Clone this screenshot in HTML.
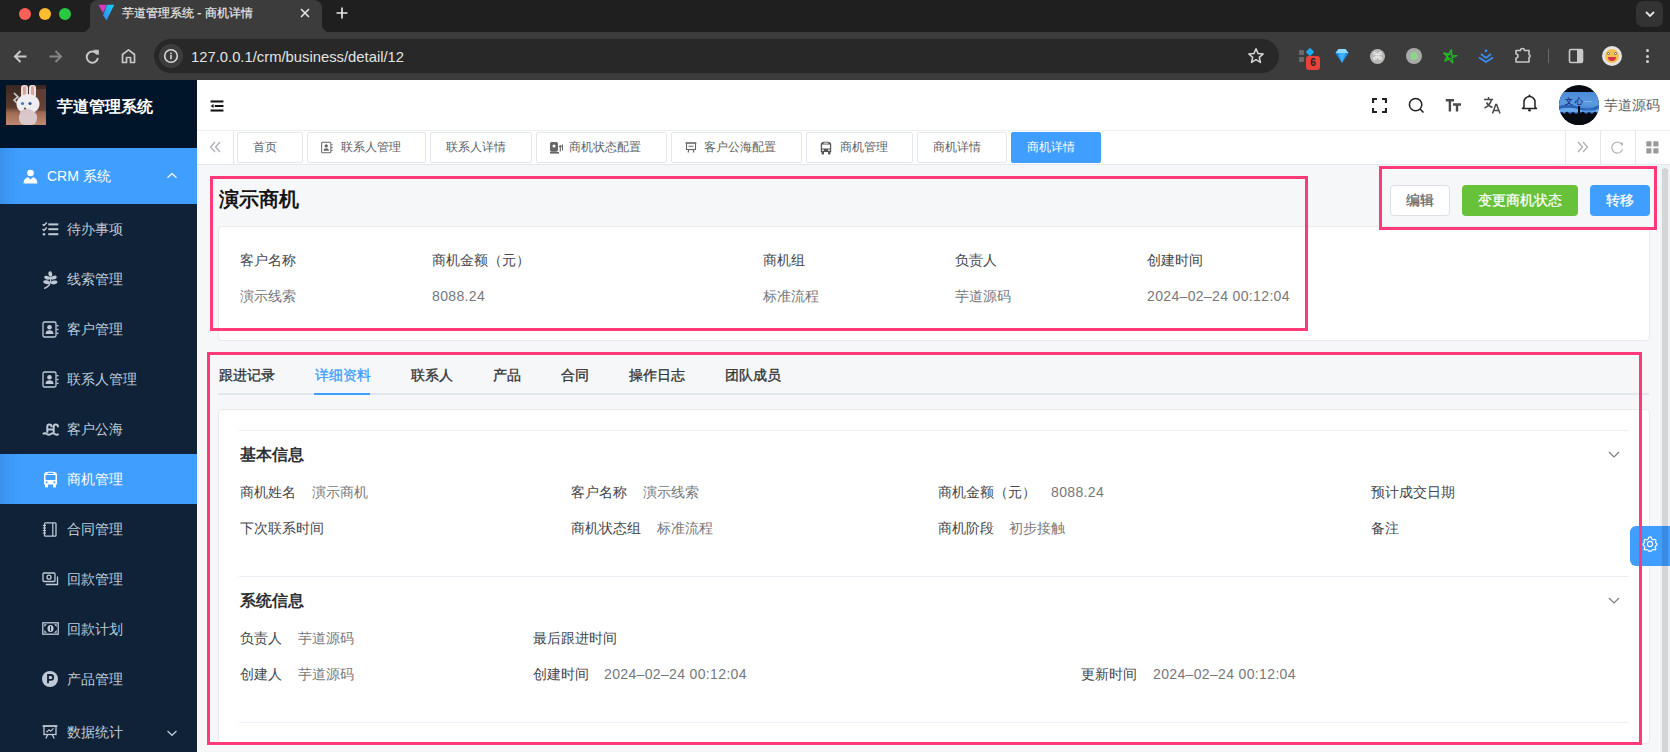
<!DOCTYPE html>
<html><head><meta charset="utf-8">
<style>
*{box-sizing:border-box;margin:0;padding:0}
html,body{width:1670px;height:752px;overflow:hidden;background:#f5f7f9;font-family:"Liberation Sans",sans-serif;}
.a{position:absolute}
/* chrome */
#tabstrip{left:0;top:0;width:1670px;height:32px;background:#1f1f1f}
#toolbar{left:0;top:32px;width:1670px;height:48px;background:#3c3c3c}
.tl{width:12px;height:12px;border-radius:50%;top:7.5px}
#tab{left:90px;top:0;width:232px;height:32px;background:#3c3c3c;border-radius:8px 8px 0 0}
#tab:before,#tab:after{content:"";position:absolute;bottom:0;width:8px;height:8px}
#tab:before{left:-8px;background:radial-gradient(circle at 0 0,#1f1f1f 8px,#3c3c3c 8.5px)}
#tab:after{right:-8px;background:radial-gradient(circle at 100% 0,#1f1f1f 8px,#3c3c3c 8.5px)}
#omni{left:154px;top:39px;width:1125px;height:34px;background:#282828;border-radius:17px}
/* sidebar */
#side{left:0;top:80px;width:197px;height:672px;background:#0f2237}
#logo{left:0;top:80px;width:197px;height:68px;background:#001529}
.mi{position:absolute;left:0;width:197px;height:50px;color:#bfcbd9;font-size:14px;line-height:50px}
.mi .t{position:absolute;left:67px;top:0}
.mi svg{position:absolute;left:42px;top:18px}
.act{background:linear-gradient(90deg,#3a90ea 0,#3d97f5 8px,#409eff 20px);color:#fff}
/* header */
#hdr{left:197px;top:80px;width:1473px;height:51px;background:#fff;border-bottom:1px solid #eee}
#tags{left:197px;top:131px;width:1473px;height:34px;background:#fff;border-bottom:1px solid #e4e7ed}
.tag{position:absolute;top:132px;height:31px;border:1px solid #e4e7ed;border-radius:2px;background:#fff;font-size:12px;line-height:29px;color:#606266;white-space:nowrap}
.tag .t{position:absolute;top:0}
.pink{position:absolute;border:3px solid #fe3a78}
.card{position:absolute;background:#fff;border:1px solid #e8eaef;border-radius:4px}
.lbl{position:absolute;font-size:14px;color:#45474b;white-space:nowrap;line-height:20px}
.val{position:absolute;font-size:14px;color:#76787c;white-space:nowrap;line-height:20px}
.btn{position:absolute;top:185px;height:31px;border-radius:4px;font-size:14px;line-height:31px;text-align:center;color:#fff;-webkit-text-stroke:0.25px currentColor}
.tabi{position:absolute;top:365px;font-size:14px;line-height:20px;color:#303133;-webkit-text-stroke:0.3px currentColor;white-space:nowrap}
.sec{position:absolute;font-size:16px;font-weight:bold;color:#303133;line-height:22px}
.num{letter-spacing:0.35px}
.hl{position:absolute;height:1px;background:#ebeef5}
</style></head><body>
<!-- CHROME -->
<div id="tabstrip" class="a"></div>
<div id="toolbar" class="a"></div>
<div class="a tl" style="left:19px;background:#fe5f57"></div>
<div class="a tl" style="left:39px;background:#febc2e"></div>
<div class="a tl" style="left:59px;background:#28c840"></div>
<div id="tab" class="a"></div>
<svg class="a" style="left:97px;top:4px" width="18" height="18" viewBox="0 0 18 18">
<defs><linearGradient id="vg" x1="0" y1="1" x2="1" y2="0"><stop offset="0" stop-color="#3b7ef0"/><stop offset="1" stop-color="#12d6f8"/></linearGradient></defs>
<polygon points="1.4,0.8 9.6,0.8 6,8.9" fill="#d93bc0"/>
<polygon points="10,0.8 17.2,0.8 9.6,16.6 6,11.3" fill="url(#vg)"/>
</svg>
<div class="a" style="left:122px;top:5px;font-size:12px;line-height:16px;color:#e6e6e6;white-space:nowrap;-webkit-text-stroke:0.2px #e6e6e6">芋道管理系统 - 商机详情</div>
<svg class="a" style="left:299px;top:7px" width="12" height="12" viewBox="0 0 12 12"><path d="M2 2L10 10M10 2L2 10" stroke="#e6e6e6" stroke-width="1.6"/></svg>
<svg class="a" style="left:335px;top:6px" width="14" height="14" viewBox="0 0 14 14"><path d="M7 1.5V12.5M1.5 7H12.5" stroke="#e6e6e6" stroke-width="1.7"/></svg>
<div class="a" style="left:1636px;top:1px;width:27px;height:26px;border-radius:7px;background:#333"></div>
<svg class="a" style="left:1644px;top:9px" width="12" height="10" viewBox="0 0 12 10"><path d="M2 3L6 7L10 3" stroke="#e6e6e6" stroke-width="1.8" fill="none"/></svg>
<!-- toolbar icons -->
<svg class="a" style="left:13px;top:49px" width="15" height="15" viewBox="0 0 15 15"><path d="M13.5 7.5H2.5M7.5 2L2 7.5L7.5 13" stroke="#c8c8c8" stroke-width="2" fill="none"/></svg>
<svg class="a" style="left:48px;top:49px" width="15" height="15" viewBox="0 0 15 15"><path d="M1.5 7.5H12.5M7.5 2L13 7.5L7.5 13" stroke="#858585" stroke-width="2" fill="none"/></svg>
<svg class="a" style="left:85px;top:49px" width="15" height="15" viewBox="0 0 15 15"><path d="M12.2 5.2A5.6 5.6 0 1 0 12.9 9" stroke="#c8c8c8" stroke-width="1.9" fill="none"/><path d="M8.8 1.2H13.4V5.8Z" fill="#c8c8c8" stroke="#c8c8c8" stroke-width="0.8"/></svg>
<svg class="a" style="left:121px;top:48px" width="15" height="16" viewBox="0 0 15 16"><path d="M1.5 14.5V6.5L7.5 1.8L13.5 6.5V14.5H9.5V9.5H5.5V14.5Z" stroke="#c8c8c8" stroke-width="1.7" fill="none" stroke-linejoin="round"/></svg>
<div id="omni" class="a"></div>
<div class="a" style="left:159px;top:44px;width:24px;height:24px;border-radius:50%;background:#3c3c3c"></div>
<svg class="a" style="left:163px;top:48px" width="16" height="16" viewBox="0 0 16 16"><circle cx="8" cy="8" r="6.3" stroke="#d8d8d8" stroke-width="1.6" fill="none"/><rect x="7.2" y="7" width="1.6" height="4.2" fill="#d8d8d8"/><rect x="7.2" y="4.6" width="1.6" height="1.6" fill="#d8d8d8"/></svg>
<div class="a" style="left:191px;top:48px;font-size:14.8px;line-height:18px;color:#e3e3e3;white-space:nowrap">127.0.0.1/crm/business/detail/12</div>
<svg class="a" style="left:1247px;top:47px" width="18" height="18" viewBox="0 0 18 18"><path d="M9 1.8L11.1 6.6L16.2 7L12.3 10.4L13.5 15.4L9 12.7L4.5 15.4L5.7 10.4L1.8 7L6.9 6.6Z" stroke="#d8d8d8" stroke-width="1.5" fill="none" stroke-linejoin="round"/></svg>
<div class="a" style="left:1299px;top:50px;width:5px;height:5px;background:#6a6a6a;border-radius:1px"></div>
<div class="a" style="left:1299px;top:57px;width:5px;height:5px;background:#6a6a6a;border-radius:1px"></div>
<div class="a" style="left:1307px;top:49px;width:6px;height:6px;background:#1fa9f2;transform:rotate(45deg);border-radius:1px"></div>
<div class="a" style="left:1306px;top:56px;width:14px;height:14px;background:#e8423a;border-radius:3px;font-size:10px;font-weight:bold;line-height:14px;color:#222;text-align:center">6</div>
<svg class="a" style="left:1335px;top:48px" width="14" height="16" viewBox="0 0 14 16"><path d="M0.5 5L3.5 1H10.5L13.5 5L7 15Z" fill="#1f8fe8"/><path d="M0.5 5L3.5 1H10.5L13.5 5Z" fill="#8fd8ff"/><path d="M3.5 5L7 15L10.5 5Z" fill="#3fb0ff"/></svg>
<div class="a" style="left:1370px;top:49px;width:15px;height:15px;border-radius:50%;background:#b8b8b8"></div>
<div class="a" style="left:1372px;top:49px;font-size:11px;line-height:15px;color:#f0f0f0">⌘</div>
<div class="a" style="left:1406px;top:48px;width:16px;height:16px;border-radius:50%;background:#a9a9a9"></div>
<div class="a" style="left:1410px;top:52px;width:8px;height:8px;border-radius:50%;background:#8fd18f"></div>
<svg class="a" style="left:1442px;top:48px" width="16" height="16" viewBox="0 0 16 16"><path d="M8.0 1.5 L12.1 14.2 L1.3 6.3 L14.7 6.3 L3.9 14.2Z" stroke="#22b422" stroke-width="1.4" fill="none" stroke-linejoin="round" transform="rotate(12 8 8)"/></svg>
<svg class="a" style="left:1478px;top:49px" width="16" height="14" viewBox="0 0 16 14"><circle cx="8" cy="1.8" r="1.4" fill="#3a8ef5"/><path d="M3 5L8 9L13 5M1 8.5L8 13L15 8.5" stroke="#3a8ef5" stroke-width="1.7" fill="none"/></svg>
<svg class="a" style="left:1514px;top:46px" width="18" height="18" viewBox="0 0 18 18"><path d="M2 4.5H6.5A2 2 0 0 1 10.5 4.5H15V8.5A1.6 1.6 0 0 1 15 11.5V16H2V12A2 2 0 0 0 2 8Z" stroke="#c8c8c8" stroke-width="1.6" fill="none" stroke-linejoin="round"/></svg>
<div class="a" style="left:1548px;top:49px;width:1px;height:14px;background:#6a6a6a"></div>
<svg class="a" style="left:1568px;top:48px" width="16" height="16" viewBox="0 0 16 16"><rect x="1.5" y="1.5" width="13" height="13" rx="1.5" stroke="#c8c8c8" stroke-width="1.6" fill="none"/><rect x="9" y="1.5" width="5.5" height="13" fill="#c8c8c8"/></svg>
<div class="a" style="left:1602px;top:46px;width:20px;height:20px;border-radius:50%;background:#e4e4e4"></div>
<div class="a" style="left:1605px;top:49px;width:14px;height:14px;border-radius:50%;background:#f2c14e"></div>
<div class="a" style="left:1608px;top:57px;width:8px;height:4px;border-radius:0 0 4px 4px;background:#d8344a"></div>
<div class="a" style="left:1607px;top:52px;width:3px;height:3px;border-radius:50%;background:#fff;border:0.5px solid #666"></div>
<div class="a" style="left:1614px;top:52px;width:3px;height:3px;border-radius:50%;background:#fff;border:0.5px solid #666"></div>
<div class="a" style="left:1646px;top:49px;width:3px;height:3px;border-radius:50%;background:#d0d0d0"></div>
<div class="a" style="left:1646px;top:55px;width:3px;height:3px;border-radius:50%;background:#d0d0d0"></div>
<div class="a" style="left:1646px;top:60px;width:3px;height:3px;border-radius:50%;background:#d0d0d0"></div>
<!-- SIDEBAR -->
<div id="side" class="a"></div>
<div id="logo" class="a"></div>
<!-- bunny logo -->
<svg class="a" style="left:6px;top:85px" width="40" height="40" viewBox="0 0 40 40">
<defs><linearGradient id="bg1" x1="0" y1="0" x2="0" y2="1"><stop offset="0" stop-color="#3b2722"/><stop offset="0.55" stop-color="#5a3a2e"/><stop offset="0.7" stop-color="#a06c55"/><stop offset="1" stop-color="#c08870"/></linearGradient></defs>
<rect width="40" height="40" fill="url(#bg1)"/>
<rect x="30" y="4" width="10" height="22" fill="#6b4434" opacity="0.7"/>
<path d="M8 8L12 12L8 15L11 18" stroke="#cfcfcf" stroke-width="1.6" fill="none"/>
<rect x="15" y="0" width="7" height="13" rx="3" fill="#e8dede"/><rect x="17" y="1" width="3" height="10" rx="1.5" fill="#d9a59c"/>
<rect x="23" y="0" width="7" height="13" rx="3" fill="#ece4e4"/><rect x="25" y="1" width="3" height="10" rx="1.5" fill="#d9a59c"/>
<rect x="13" y="26" width="18" height="14" rx="6" fill="#d9c8cc"/>
<ellipse cx="22" cy="19" rx="11.5" ry="10" fill="#efedef"/>
<ellipse cx="21" cy="28" rx="7" ry="4" fill="#dcc5ca"/>
<circle cx="16.5" cy="18.5" r="1.6" fill="#4a78b8"/><circle cx="24" cy="18.5" r="1.6" fill="#2f5a98"/>
<ellipse cx="19" cy="23.5" rx="1.2" ry="0.9" fill="#555"/>
</svg>
<div class="a" style="left:57px;top:96px;font-size:16px;font-weight:bold;line-height:22px;color:#fff;white-space:nowrap">芋道管理系统</div>
<div class="mi act" style="top:148px;height:56px;line-height:56px"><span class="t" style="left:47px">CRM 系统</span>
<svg style="left:23px;top:21px" width="15" height="15" viewBox="0 0 15 15"><circle cx="7.5" cy="4" r="3.3" fill="#fff"/><path d="M0.6 14.5C0.6 10.5 3 8.6 5.2 8.3L7.5 10.4L9.8 8.3C12 8.6 14.4 10.5 14.4 14.5Z" fill="#fff"/></svg>
<svg style="left:166px;top:23px" width="12" height="10" viewBox="0 0 12 10"><path d="M1.5 6.8L6 2.5L10.5 6.8" stroke="#fff" stroke-width="1.2" fill="none"/></svg>
</div>
<div class="mi" style="top:204px"><span class="t">待办事项</span>
<svg style="left:42px;top:18px" width="17" height="15" viewBox="0 0 17 15"><path d="M0.6 2.2L2 3.6L4.8 0.6M0.6 7L2 8.4L4.8 5.4" stroke="#c0cad6" stroke-width="1.4" fill="none"/><circle cx="2" cy="12.3" r="1.3" fill="#c0cad6"/><rect x="6.3" y="1.4" width="10" height="2" fill="#c0cad6"/><rect x="6.3" y="6.2" width="10" height="2" fill="#c0cad6"/><rect x="6.3" y="11.2" width="10" height="2" fill="#c0cad6"/></svg></div>
<div class="mi" style="top:254px"><span class="t">线索管理</span>
<svg style="left:43px;top:17px" width="15" height="18" viewBox="0 0 15 18"><path d="M1 17.5C4 16.5 6.5 14.5 7.6 11" stroke="#c0cad6" stroke-width="1.3" fill="none"/><path d="M7.6 11V6" stroke="#c0cad6" stroke-width="1.2"/><ellipse cx="7.3" cy="3" rx="1.9" ry="2.8" fill="#c0cad6" transform="rotate(-10 7.3 3)"/><ellipse cx="4.2" cy="6.8" rx="3.1" ry="1.8" fill="#c0cad6" transform="rotate(18 4.2 6.8)"/><ellipse cx="10.7" cy="6.6" rx="3.1" ry="1.8" fill="#c0cad6" transform="rotate(-18 10.7 6.6)"/><ellipse cx="3.6" cy="11.2" rx="3.4" ry="1.9" fill="#c0cad6" transform="rotate(10 3.6 11.2)"/><ellipse cx="11.2" cy="11.4" rx="3.3" ry="1.9" fill="#c0cad6" transform="rotate(-10 11.2 11.4)"/></svg></div>
<div class="mi" style="top:304px"><span class="t">客户管理</span>
<svg style="left:42px;top:17px" width="17" height="17" viewBox="0 0 17 17"><rect x="1" y="1" width="13" height="15" rx="1.5" stroke="#c0cad6" stroke-width="1.3" fill="none"/><circle cx="7.5" cy="6.3" r="2.3" fill="#c0cad6"/><path d="M3.5 13C3.5 10.3 5.3 9.3 7.5 9.3C9.7 9.3 11.5 10.3 11.5 13Z" fill="#c0cad6"/><rect x="14.5" y="4" width="2" height="1.4" fill="#c0cad6"/><rect x="14.5" y="7.8" width="2" height="1.4" fill="#c0cad6"/><rect x="14.5" y="11.6" width="2" height="1.4" fill="#c0cad6"/></svg></div>
<div class="mi" style="top:354px"><span class="t">联系人管理</span>
<svg style="left:42px;top:17px" width="17" height="17" viewBox="0 0 17 17"><rect x="1" y="1" width="13" height="15" rx="1.5" stroke="#c0cad6" stroke-width="1.3" fill="none"/><circle cx="7.5" cy="6.3" r="2.3" fill="#c0cad6"/><path d="M3.5 13C3.5 10.3 5.3 9.3 7.5 9.3C9.7 9.3 11.5 10.3 11.5 13Z" fill="#c0cad6"/><rect x="14.5" y="4" width="2" height="1.4" fill="#c0cad6"/><rect x="14.5" y="7.8" width="2" height="1.4" fill="#c0cad6"/><rect x="14.5" y="11.6" width="2" height="1.4" fill="#c0cad6"/></svg></div>
<div class="mi" style="top:404px"><span class="t">客户公海</span>
<svg style="left:42px;top:18px" width="17" height="14" viewBox="0 0 17 14"><path d="M5.3 10.8V4.6A2.1 2.1 0 0 1 9.5 4.6V5.2M11.7 10.8V4.6A2.1 2.1 0 0 1 15.9 4.6V5.2M5.3 7.6H11.7" stroke="#c0cad6" stroke-width="2" fill="none"/><path d="M0.8 12Q2.8 10.6 4.8 12T8.8 12T12.8 12T16.6 12" stroke="#c0cad6" stroke-width="1.9" fill="none"/></svg></div>
<div class="mi act" style="top:454px"><span class="t">商机管理</span>
<svg style="left:43px;top:17px" width="15" height="17" viewBox="0 0 15 17"><path d="M1 4C1 1.5 3 0.8 7.5 0.8C12 0.8 14 1.5 14 4V13.5H1Z" fill="#fff"/><rect x="2.5" y="4" width="10" height="5" rx="0.8" fill="#409eff"/><rect x="4.5" y="1.8" width="6" height="1.2" fill="#409eff"/><circle cx="3.7" cy="11.3" r="1" fill="#409eff"/><circle cx="11.3" cy="11.3" r="1" fill="#409eff"/><rect x="2" y="13" width="3" height="3.5" rx="0.8" fill="#fff"/><rect x="10" y="13" width="3" height="3.5" rx="0.8" fill="#fff"/></svg></div>
<div class="mi" style="top:504px"><span class="t">合同管理</span>
<svg style="left:42px;top:18px" width="15" height="15" viewBox="0 0 15 15"><rect x="2.5" y="0.8" width="11.5" height="13.4" rx="1" stroke="#c0cad6" stroke-width="1.3" fill="none"/><path d="M10.8 1V14" stroke="#c0cad6" stroke-width="1.2"/><path d="M0.8 3.5H4M0.8 6H4M0.8 8.5H4M0.8 11H4" stroke="#c0cad6" stroke-width="1.2"/></svg></div>
<div class="mi" style="top:554px"><span class="t">回款管理</span>
<svg style="left:42px;top:18px" width="17" height="14" viewBox="0 0 17 14"><rect x="1" y="1" width="12" height="8.5" rx="1" stroke="#c0cad6" stroke-width="1.3" fill="none"/><circle cx="7" cy="5.2" r="2" stroke="#c0cad6" stroke-width="1.3" fill="none"/><path d="M3.8 12.5H15.5V4.5" stroke="#c0cad6" stroke-width="1.3" fill="none"/></svg></div>
<div class="mi" style="top:604px"><span class="t">回款计划</span>
<svg style="left:42px;top:18px" width="17" height="13" viewBox="0 0 17 13"><rect x="0.8" y="0.8" width="15.4" height="11.4" stroke="#c0cad6" stroke-width="1.3" fill="none"/><ellipse cx="8.5" cy="6.5" rx="3" ry="3.6" fill="#c0cad6"/><path d="M2.3 2.3H5L2.3 5ZM14.7 2.3H12L14.7 5ZM2.3 10.7H5L2.3 8ZM14.7 10.7H12L14.7 8Z" fill="#c0cad6"/><path d="M8.5 4.2V8.8" stroke="#0f2237" stroke-width="1"/></svg></div>
<div class="mi" style="top:654px"><span class="t">产品管理</span>
<svg style="left:42px;top:17px" width="16" height="16" viewBox="0 0 16 16"><circle cx="8" cy="8" r="8" fill="#c0cad6"/><path d="M6 12.3V4H8.8A2.4 2.4 0 0 1 8.8 8.8H6" stroke="#0f2237" stroke-width="1.8" fill="none"/></svg></div>
<div class="mi" style="top:704px;height:56px;line-height:56px"><span class="t">数据统计</span>
<svg style="left:42px;top:21px" width="16" height="14" viewBox="0 0 16 14"><path d="M0.5 1H15.5" stroke="#c0cad6" stroke-width="1.4"/><rect x="2" y="1" width="12" height="8.5" stroke="#c0cad6" stroke-width="1.3" fill="none"/><path d="M4.5 7.2L7 4.8L8.7 6.2L11.5 3.3" stroke="#c0cad6" stroke-width="1.2" fill="none"/><path d="M5.8 9.5L3.8 13.5M10.2 9.5L12.2 13.5" stroke="#c0cad6" stroke-width="1.3"/></svg>
<svg style="left:166px;top:24px" width="12" height="10" viewBox="0 0 12 10"><path d="M1.5 3L6 7.3L10.5 3" stroke="#bfcbd9" stroke-width="1.2" fill="none"/></svg></div>
<!-- HEADER -->
<div id="hdr" class="a"></div>
<svg class="a" style="left:210px;top:99.5px" width="14" height="12" viewBox="0 0 15 13"><rect x="0.5" y="0.5" width="14" height="2.2" fill="#111"/><rect x="5" y="5.4" width="9.5" height="2.2" fill="#111"/><rect x="0.5" y="10.3" width="14" height="2.2" fill="#111"/><path d="M0.5 6.5L3.8 4.2V8.8Z" fill="#111"/></svg>
<svg class="a" style="left:1372px;top:98px" width="15" height="15" viewBox="0 0 15 15"><path d="M1 5V1H5M10 1H14V5M14 10V14H10M5 14H1V10" stroke="#222" stroke-width="2.2" fill="none"/></svg>
<svg class="a" style="left:1408px;top:97px" width="17" height="17" viewBox="0 0 17 17"><circle cx="7.6" cy="7.6" r="6.2" stroke="#222" stroke-width="1.5" fill="none"/><path d="M12 12L15.5 15.5" stroke="#222" stroke-width="1.6"/></svg>
<svg class="a" style="left:1445px;top:98px" width="17" height="15" viewBox="0 0 17 15"><path d="M0.8 2.2H9M4.9 2.2V13.5M8 6.5H16M12 6.5V13.5" stroke="#4a4a4a" stroke-width="2.4" fill="none"/></svg>
<svg class="a" style="left:1483px;top:96px" width="18" height="18" viewBox="0 0 18 18"><path d="M1 3.5H10M5.5 1V3.5M8.5 3.5C7.5 7.5 5 10.5 1.5 12M3.5 6.5C5 9 7 10.8 9.5 11.5" stroke="#4a4a4a" stroke-width="1.5" fill="none"/><path d="M9.5 17.5L12.8 8.5H13.6L17 17.5M10.8 14.5H15.8" stroke="#4a4a4a" stroke-width="1.5" fill="none"/></svg>
<svg class="a" style="left:1521px;top:94px" width="17" height="18" viewBox="0 0 17 18"><path d="M3 13V8A5.5 5.5 0 0 1 14 8V13L15.5 14.5H1.5Z" stroke="#222" stroke-width="1.5" fill="none" stroke-linejoin="round"/><circle cx="8.5" cy="16.3" r="1.3" fill="#222"/><circle cx="8.5" cy="1.6" r="1" fill="#222"/></svg>
<svg class="a" style="left:1559px;top:85px" width="40" height="40" viewBox="0 0 40 40">
<defs><clipPath id="avc"><circle cx="20" cy="20" r="20"/></clipPath><linearGradient id="avg" x1="0" y1="0" x2="0" y2="1"><stop offset="0" stop-color="#4a8ad8"/><stop offset="0.5" stop-color="#5b9be0"/><stop offset="1" stop-color="#2f6fc8"/></linearGradient></defs>
<g clip-path="url(#avc)">
<rect width="40" height="40" fill="#070a10"/>
<rect x="0" y="7" width="40" height="23" fill="url(#avg)"/>
<path d="M0 21Q10 18 20 22T40 20V26Q30 23 20 26T0 25Z" fill="#2a62b8"/>
<path d="M0 24Q12 21 22 25T40 23V27H0Z" fill="#6aa8ec"/>
<text x="6" y="19" font-size="7.5" font-weight="bold" fill="#22307a" font-family="Liberation Sans, sans-serif">文 心</text>
<rect x="25" y="16" width="8" height="1" fill="#7fb0e8"/>
<path d="M0 29L3 27L5 29L8 26.5L11 29L14 27L17 29L19 28V21H21V28L24 26.5L27 29L30 27L33 29L36 26.5L40 29V40H0Z" fill="#080b12"/>
</g></svg>
<div class="a" style="left:1604px;top:95px;font-size:14px;line-height:20px;color:#606266;white-space:nowrap">芋道源码</div>
<!-- TAGS -->
<div id="tags" class="a"></div>
<div class="a" style="left:233px;top:131px;width:1px;height:33px;background:#e4e7ed"></div>
<svg class="a" style="left:209px;top:141px" width="13" height="12" viewBox="0 0 13 12"><path d="M6 1L1.5 6L6 11M11 1L6.5 6L11 11" stroke="#a8abb2" stroke-width="1.2" fill="none"/></svg>
<div class="a" style="left:1565px;top:131px;width:1px;height:33px;background:#e4e7ed"></div>
<div class="a" style="left:1600px;top:131px;width:1px;height:33px;background:#e4e7ed"></div>
<div class="a" style="left:1635px;top:131px;width:1px;height:33px;background:#e4e7ed"></div>
<svg class="a" style="left:1576px;top:141px" width="13" height="12" viewBox="0 0 13 12"><path d="M2 1L6.5 6L2 11M7 1L11.5 6L7 11" stroke="#a8abb2" stroke-width="1.2" fill="none"/></svg>
<svg class="a" style="left:1610px;top:141px" width="14" height="13" viewBox="0 0 14 13"><path d="M12.3 4.3A5.5 5.5 0 1 0 12.6 8.2" stroke="#b0b3b8" stroke-width="1.2" fill="none"/><path d="M10 1.5L13 1.8L12.6 5Z" fill="#b0b3b8"/></svg>
<svg class="a" style="left:1646px;top:141px" width="13" height="13" viewBox="0 0 13 13"><rect x="0.3" y="0.3" width="5.2" height="5.2" rx="0.8" fill="#999"/><rect x="7.3" y="0.3" width="5.2" height="5.2" rx="0.8" fill="#999"/><rect x="0.3" y="7.3" width="5.2" height="5.2" rx="0.8" fill="#999"/><rect x="7.3" y="7.3" width="5.2" height="5.2" rx="0.8" fill="#999"/></svg>
<div class="tag" style="left:237px;width:66px"><span class="t" style="left:15px">首页</span></div>
<div class="tag" style="left:307px;width:119px"><span class="t" style="left:33px">联系人管理</span>
<svg class="a" style="left:13px;top:8px" width="12" height="13" viewBox="0 0 13 13"><rect x="0.7" y="0.7" width="10" height="11.6" rx="1.2" stroke="#666" stroke-width="1.1" fill="none"/><circle cx="5.7" cy="4.8" r="1.8" fill="#666"/><path d="M2.8 10C2.8 8 4 7.2 5.7 7.2C7.4 7.2 8.6 8 8.6 10Z" fill="#666"/><rect x="11" y="3" width="1.6" height="1.1" fill="#666"/><rect x="11" y="6" width="1.6" height="1.1" fill="#666"/><rect x="11" y="9" width="1.6" height="1.1" fill="#666"/></svg></div>
<div class="tag" style="left:430px;width:102px"><span class="t" style="left:15px">联系人详情</span></div>
<div class="tag" style="left:536px;width:131px"><span class="t" style="left:32px">商机状态配置</span>
<svg class="a" style="left:13px;top:9px" width="14" height="12" viewBox="0 0 14 12"><rect x="0.6" y="0.6" width="6.8" height="8.5" rx="1.2" stroke="#666" stroke-width="1.1" fill="#666"/><circle cx="4" cy="4" r="1.5" fill="#fff"/><rect x="0" y="10" width="9" height="1.6" fill="#666"/><path d="M10.3 9.5V3.5M9 5L10.3 3.5L11.6 5M12.5 2.5V8.5" stroke="#666" stroke-width="1.1" fill="none"/></svg></div>
<div class="tag" style="left:671px;width:131px"><span class="t" style="left:32px">客户公海配置</span>
<svg class="a" style="left:13px;top:9px" width="12" height="12" viewBox="0 0 12 12"><path d="M0.5 1H11.5" stroke="#666" stroke-width="1.1"/><rect x="1.5" y="1" width="9" height="6.5" stroke="#666" stroke-width="1.1" fill="none"/><path d="M3.5 4.3H8.5M4 7.5L3 10.5M8 7.5L9 10.5" stroke="#666" stroke-width="1.1"/></svg></div>
<div class="tag" style="left:806px;width:107px"><span class="t" style="left:33px">商机管理</span>
<svg class="a" style="left:13px;top:8px" width="12" height="14" viewBox="0 0 15 17"><path d="M1 4C1 1.5 3 0.8 7.5 0.8C12 0.8 14 1.5 14 4V13.5H1Z" fill="#555"/><rect x="2.5" y="4" width="10" height="5" rx="0.8" fill="#fff"/><rect x="4.5" y="1.8" width="6" height="1.2" fill="#fff"/><circle cx="3.7" cy="11.3" r="1.1" fill="#fff"/><circle cx="11.3" cy="11.3" r="1.1" fill="#fff"/><rect x="2" y="13" width="3" height="3.5" rx="0.8" fill="#555"/><rect x="10" y="13" width="3" height="3.5" rx="0.8" fill="#555"/></svg></div>
<div class="tag" style="left:917px;width:90px"><span class="t" style="left:15px">商机详情</span></div>
<div class="tag" style="left:1011px;width:90px;background:#409eff;border-color:#409eff;color:#fff"><span class="t" style="left:15px">商机详情</span></div>
<!-- CONTENT -->
<div class="card" style="left:218px;top:226px;width:1432px;height:115px"></div>
<div class="a" style="left:219px;top:185.5px;font-size:19.5px;font-weight:bold;color:#151515;line-height:26px">演示商机</div>
<div class="lbl" style="left:240px;top:250px">客户名称</div>
<div class="val" style="left:240px;top:286px">演示线索</div>
<div class="lbl" style="left:432px;top:250px">商机金额（元）</div>
<div class="val" style="left:432px;top:286px"><span class="num">8088.24</span></div>
<div class="lbl" style="left:763px;top:250px">商机组</div>
<div class="val" style="left:763px;top:286px">标准流程</div>
<div class="lbl" style="left:955px;top:250px">负责人</div>
<div class="val" style="left:955px;top:286px">芋道源码</div>
<div class="lbl" style="left:1147px;top:250px">创建时间</div>
<div class="val" style="left:1147px;top:286px"><span class="num">2024–02–24 00:12:04</span></div>
<div class="btn" style="left:1390px;width:60px;background:#fff;border:1px solid #dcdfe6;color:#606266;line-height:29px">编辑</div>
<div class="btn" style="left:1462px;width:116px;background:#67c23a">变更商机状态</div>
<div class="btn" style="left:1590px;width:60px;background:#409eff">转移</div>
<!-- tabs -->
<div class="a" style="left:218px;top:393px;width:1431px;height:2px;background:#e4e7ed"></div>
<div class="a" style="left:314px;top:393px;width:56px;height:2px;background:#409eff"></div>
<div class="tabi" style="left:219px">跟进记录</div>
<div class="tabi" style="left:315px;color:#409eff">详细资料</div>
<div class="tabi" style="left:411px">联系人</div>
<div class="tabi" style="left:493px">产品</div>
<div class="tabi" style="left:561px">合同</div>
<div class="tabi" style="left:629px">操作日志</div>
<div class="tabi" style="left:725px">团队成员</div>
<div class="card" style="left:218px;top:409px;width:1432px;height:335px"></div>
<div class="hl" style="left:239px;top:430px;width:1390px"></div>
<div class="sec" style="left:240px;top:444px">基本信息</div>
<div class="lbl" style="left:240px;top:482px">商机姓名</div><div class="val" style="left:312px;top:482px">演示商机</div>
<div class="lbl" style="left:571px;top:482px">客户名称</div><div class="val" style="left:643px;top:482px">演示线索</div>
<div class="lbl" style="left:938px;top:482px">商机金额（元）</div><div class="val" style="left:1051px;top:482px"><span class="num">8088.24</span></div>
<div class="lbl" style="left:1371px;top:482px">预计成交日期</div>
<div class="lbl" style="left:240px;top:518px">下次联系时间</div>
<div class="lbl" style="left:571px;top:518px">商机状态组</div><div class="val" style="left:657px;top:518px">标准流程</div>
<div class="lbl" style="left:938px;top:518px">商机阶段</div><div class="val" style="left:1009px;top:518px">初步接触</div>
<div class="lbl" style="left:1371px;top:518px">备注</div>
<div class="hl" style="left:239px;top:576px;width:1390px"></div>
<div class="sec" style="left:240px;top:590px">系统信息</div>
<div class="lbl" style="left:240px;top:628px">负责人</div><div class="val" style="left:298px;top:628px">芋道源码</div>
<div class="lbl" style="left:533px;top:628px">最后跟进时间</div>
<div class="lbl" style="left:240px;top:664px">创建人</div><div class="val" style="left:298px;top:664px">芋道源码</div>
<div class="lbl" style="left:533px;top:664px">创建时间</div><div class="val" style="left:604px;top:664px"><span class="num">2024–02–24 00:12:04</span></div>
<div class="lbl" style="left:1081px;top:664px">更新时间</div><div class="val" style="left:1153px;top:664px"><span class="num">2024–02–24 00:12:04</span></div>
<div class="hl" style="left:239px;top:722px;width:1390px"></div>
<svg class="a" style="left:1608px;top:450px" width="12" height="9" viewBox="0 0 12 9"><path d="M1 2L6 7L11 2" stroke="#7a7c80" stroke-width="1.2" fill="none"/></svg>
<svg class="a" style="left:1608px;top:596px" width="12" height="9" viewBox="0 0 12 9"><path d="M1 2L6 7L11 2" stroke="#7a7c80" stroke-width="1.2" fill="none"/></svg>
<!-- scrollbar -->
<div class="a" style="left:1660px;top:165px;width:10px;height:587px;background:#f0f1f3"></div>
<div class="a" style="left:1662px;top:168px;width:6px;height:600px;border-radius:3px;background:#d3d5d8"></div>
<!-- gear -->
<div class="a" style="left:1630px;top:526px;width:40px;height:40px;background:#409eff;border-radius:6px 0 0 6px"></div>
<svg class="a" style="left:1642px;top:536px" width="16" height="16" viewBox="0 0 16 16"><path d="M8 0.9L9.4 1.3L9.8 3.1L11.3 3.9L13 3.3L14 4.4L13.5 6.2L14.3 7.6L15.1 8L14.7 9.4L13.5 10L13 11.6L14 13L13 14L11.3 13.4L9.8 14.2L9.4 15.1H6.6L6.2 14.2L4.7 13.4L3 14L2 13L3 11.6L2.5 10L1.3 9.4L0.9 8L1.7 7.6L2.5 6.2L2 4.4L3 3.3L4.7 3.9L6.2 3.1L6.6 1.3Z" stroke="#fff" stroke-width="1.1" fill="none" stroke-linejoin="round"/><circle cx="8" cy="8" r="2.6" stroke="#fff" stroke-width="1.1" fill="none"/></svg>
<div class="a" style="left:1662px;top:526px;width:6px;height:40px;background:rgba(40,60,90,0.18)"></div>
<!-- pink boxes -->
<div class="pink" style="left:210px;top:176px;width:1098px;height:155px"></div>
<div class="pink" style="left:1379px;top:166px;width:278px;height:64px"></div>
<div class="pink" style="left:207px;top:352px;width:1435px;height:393px"></div>
</body></html>
